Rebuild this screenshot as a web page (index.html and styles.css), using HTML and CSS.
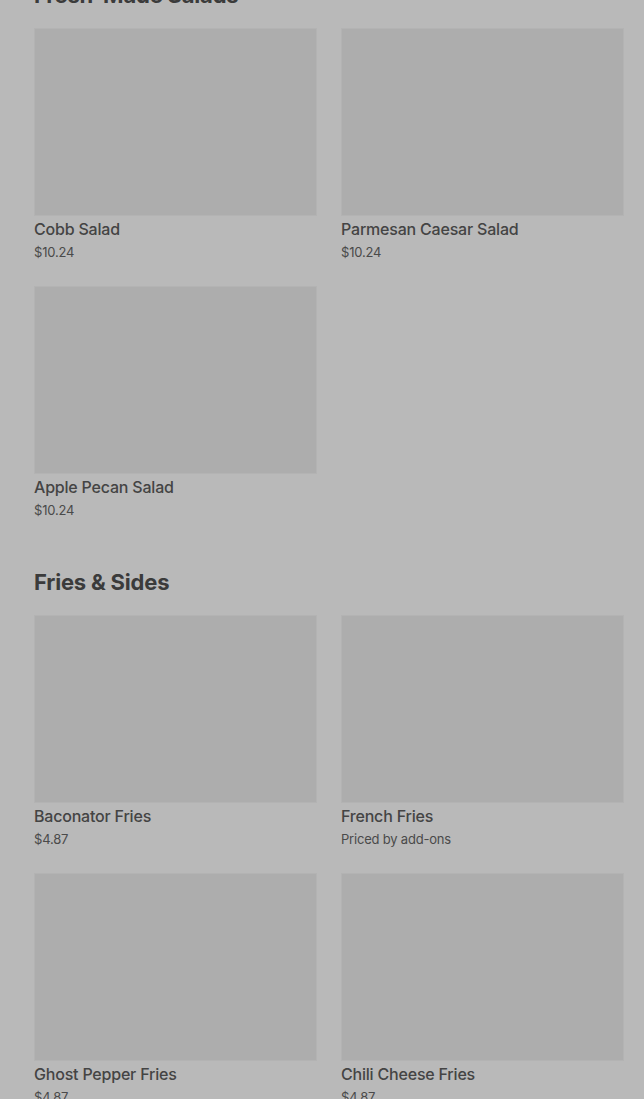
FILE: index.html
```html
<!DOCTYPE html>
<html lang="en">
<head>
    <meta charset="UTF-8">
    <meta name="viewport" content="width=device-width, initial-scale=1.0">
    <title>Menu</title>
<link rel="stylesheet" href="styles.css">
</head>
<body>
    <div id="menu">
        <div class="section">
            <h2 class="sectionTitle">Fresh-Made Salads</h2>
            <div class="grid">
                <div class="item">
                    <div class="photo"></div>
                    <div class="name">Cobb Salad</div>
                    <div class="price">$10.24</div>
                </div>
                <div class="item">
                    <div class="photo"></div>
                    <div class="name">Parmesan Caesar Salad</div>
                    <div class="price">$10.24</div>
                </div>
                <div class="item">
                    <div class="photo"></div>
                    <div class="name">Apple Pecan Salad</div>
                    <div class="price">$10.24</div>
                </div>
            </div>
        </div>
        <div class="section">
            <h2 class="sectionTitle">Fries &amp; Sides</h2>
            <div class="grid">
                <div class="item">
                    <div class="photo"></div>
                    <div class="name">Baconator Fries</div>
                    <div class="price">$4.87</div>
                </div>
                <div class="item">
                    <div class="photo"></div>
                    <div class="name">French Fries</div>
                    <div class="price">Priced by add-ons</div>
                </div>
                <div class="item">
                    <div class="photo"></div>
                    <div class="name">Ghost Pepper Fries</div>
                    <div class="price">$4.87</div>
                </div>
                <div class="item">
                    <div class="photo"></div>
                    <div class="name">Chili Cheese Fries</div>
                    <div class="price">$4.87</div>
                </div>
            </div>
        </div>
    </div>
</body>
</html>
```
FILE: styles.css
```css
body{
    margin: 0;
    background-color: #b9b9b9;
    font-family: Inter, "Liberation Sans", sans-serif;
    overflow: hidden;
}
#menu{
    margin-top: -19px;
    padding: 0 20px 0 34px;
}
.section{
    margin-bottom: 49px;
}
.sectionTitle{
    margin: 0 0 19px 0;
    font-size: 22px;
    line-height: 28px;
    font-weight: 700;
    letter-spacing: -0.2px;
    color: #3b3b3b;
}
.grid{
    display: grid;
    grid-template-columns: 1fr 1fr;
    column-gap: 24px;
    row-gap: 25px;
}
.photo{
    height: 188px;
    box-sizing: border-box;
    background-color: #adadad;
    border: 1px solid #b3b3b3;
}
.name{
    margin-top: 3px;
    font-size: 16px;
    line-height: 20px;
    font-weight: 500;
    letter-spacing: -0.2px;
    color: #444444;
}
.price{
    margin-top: 4px;
    font-size: 13px;
    line-height: 18px;
    letter-spacing: -0.2px;
    color: #4a4a4a;
}
```
